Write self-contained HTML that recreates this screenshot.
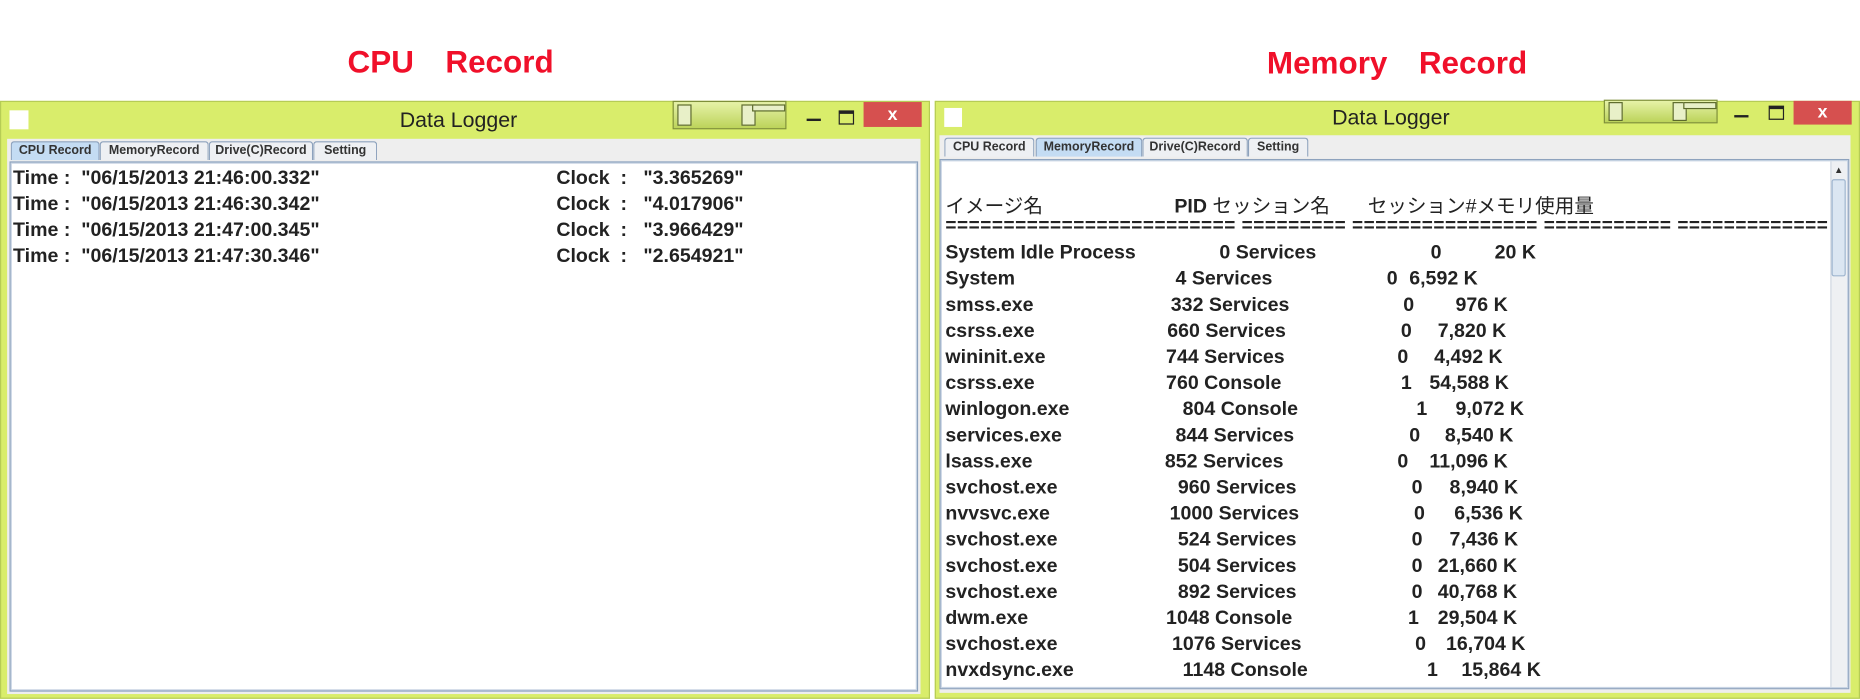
<!DOCTYPE html>
<html><head><meta charset="utf-8"><style>
html,body{margin:0;padding:0;background:#fff;width:1860px;height:700px;overflow:hidden}
#s{position:absolute;left:0;top:0;width:1568px;height:590px;transform:scale(1.18622,1.1864);transform-origin:0 0;font-family:"Liberation Sans","Noto Sans CJK JP",sans-serif}
.a{position:absolute;white-space:nowrap}
.h{color:#f0102a;font-weight:bold;font-size:26.5px}
.win{position:absolute;background:#d9ed6b;border:1px solid #b6cc55}
.ic{position:absolute;background:#fff;width:16px;height:16px}
.tt{position:absolute;font-size:18px;color:#222}
.sl{position:absolute;width:94px;height:22px;border:1px solid #7e8f3a;background:linear-gradient(#e6f2a8,#bcd35a)}
.sl i{position:absolute;border:1px solid #5c6a2a;background:#e8f0c8}
.min{position:absolute;width:12px;height:2px;background:#222}
.max{position:absolute;width:11px;height:8px;border:1px solid #222;border-top-width:3px}
.cl{position:absolute;width:49px;height:21px;background:#d6504f;color:#fff;font-size:15px;font-weight:bold;text-align:center;line-height:21px}
.tabs{position:absolute;background:#eeeeee}
.tab{position:absolute;height:15px;border:1px solid #8da2bd;border-bottom:none;background:#eef0f3;font-size:10.5px;font-weight:bold;color:#333;text-align:center;line-height:15px;border-radius:3px 3px 0 0}
.tab.on{background:#c4dcf3}
.pan{position:absolute;background:#fff;border:1px solid #8da2bd;box-shadow:inset 0 0 0 1px #c8d4e4;overflow:hidden}
.t{position:absolute;font-size:16.5px;font-weight:bold;color:#222;white-space:nowrap}
.j{font-weight:normal}
</style></head><body><div id="s">
<div class="a h" style="left:293px;top:30px">CPU　Record</div>
<div class="a h" style="left:1068px;top:31px">Memory　Record</div>

<div class="win" style="left:0;top:85px;width:782px;height:502px"></div>
<div class="ic" style="left:8px;top:93px"></div>
<div class="tt" style="left:337px;top:91px">Data Logger</div>
<div class="sl" style="left:567px;top:85px"><i style="left:3px;top:2px;width:10px;height:16px"></i><i style="left:57px;top:2px;width:10px;height:16px"></i><i style="left:66px;top:2px;width:26px;height:4px"></i></div>
<div class="min" style="left:680px;top:100px"></div>
<div class="max" style="left:707px;top:93px"></div>
<div class="cl" style="left:728px;top:86px">x</div>
<div class="tabs" style="left:6px;top:117px;width:770px;height:468px"></div>
<div class="tab on" style="left:9px;top:119px;width:73px">CPU Record</div>
<div class="tab" style="left:84px;top:119px;width:90px">MemoryRecord</div>
<div class="tab" style="left:176px;top:119px;width:86px">Drive(C)Record</div>
<div class="tab" style="left:264px;top:119px;width:52px">Setting</div>
<div class="pan" style="left:8px;top:136px;width:764px;height:445px">
<div class="t" style="left:2px;top:4px">Time :&nbsp; "06/15/2013 21:46:00.332"</div>
<div class="t" style="left:2px;top:26px">Time :&nbsp; "06/15/2013 21:46:30.342"</div>
<div class="t" style="left:2px;top:48px">Time :&nbsp; "06/15/2013 21:47:00.345"</div>
<div class="t" style="left:2px;top:70px">Time :&nbsp; "06/15/2013 21:47:30.346"</div>
<div class="t" style="left:460px;top:4px">Clock&nbsp; :&nbsp;&nbsp; "3.365269"</div>
<div class="t" style="left:460px;top:26px">Clock&nbsp; :&nbsp;&nbsp; "4.017906"</div>
<div class="t" style="left:460px;top:48px">Clock&nbsp; :&nbsp;&nbsp; "3.966429"</div>
<div class="t" style="left:460px;top:70px">Clock&nbsp; :&nbsp;&nbsp; "2.654921"</div>
</div>

<div class="win" style="left:788px;top:85px;width:778px;height:502px"></div>
<div class="ic" style="left:796px;top:91px;width:15px"></div>
<div class="tt" style="left:1123px;top:89px">Data Logger</div>
<div class="sl" style="left:1352px;top:84px;height:18px"><i style="left:3px;top:1px;width:10px;height:14px"></i><i style="left:57px;top:1px;width:10px;height:14px"></i><i style="left:66px;top:1px;width:26px;height:4px"></i></div>
<div class="min" style="left:1462px;top:97px"></div>
<div class="max" style="left:1491px;top:89px"></div>
<div class="cl" style="left:1512px;top:85px;height:20px;line-height:20px">x</div>
<div class="tabs" style="left:792px;top:114px;width:768px;height:470px"></div>
<div class="tab" style="left:796px;top:116px;width:74px">CPU Record</div>
<div class="tab on" style="left:873px;top:116px;width:88px">MemoryRecord</div>
<div class="tab" style="left:963px;top:116px;width:87px">Drive(C)Record</div>
<div class="tab" style="left:1052px;top:116px;width:49px">Setting</div>
<div class="pan" style="left:792px;top:134px;width:765px;height:445px">
<div style="position:absolute;right:1px;top:1px;width:13px;height:443px;background:#eef0f3;border-left:1px solid #d0d8e2"></div>
<div style="position:absolute;right:2px;top:16px;width:10px;height:80px;background:#dbe6f2;border:1px solid #9fb5cf;border-radius:2px"></div>
<div style="position:absolute;right:4px;top:4px;font-size:8px;color:#333">▲</div>
</div>
<div style="position:absolute;left:792px;top:134px;width:750px;height:445px;overflow:hidden">
<div class="t j" style="left:5px;top:26px">イメージ名</div>
<div class="t" style="left:198px;top:26px">PID <span class="j">セッション名</span></div>
<div class="t j" style="left:361px;top:26px">セッション#メモリ使用量</div>
<div class="t" style="left:5px;top:48px;font-size:16px;letter-spacing:0.45px">========================= ========= ================ =========== =============</div>
<div class="t" style="left:5px;top:70px">System Idle Process</div><div class="t" style="left:236px;top:70px">0 Services</div><div class="t" style="left:414px;top:70px">0</div><div class="t" style="left:468px;top:70px">20 K</div>
<div class="t" style="left:5px;top:92px">System</div><div class="t" style="left:199px;top:92px">4 Services</div><div class="t" style="left:377px;top:92px">0</div><div class="t" style="left:396px;top:92px">6,592 K</div>
<div class="t" style="left:5px;top:114px">smss.exe</div><div class="t" style="left:195px;top:114px">332 Services</div><div class="t" style="left:391px;top:114px">0</div><div class="t" style="left:435px;top:114px">976 K</div>
<div class="t" style="left:5px;top:136px">csrss.exe</div><div class="t" style="left:192px;top:136px">660 Services</div><div class="t" style="left:389px;top:136px">0</div><div class="t" style="left:420px;top:136px">7,820 K</div>
<div class="t" style="left:5px;top:158px">wininit.exe</div><div class="t" style="left:191px;top:158px">744 Services</div><div class="t" style="left:386px;top:158px">0</div><div class="t" style="left:417px;top:158px">4,492 K</div>
<div class="t" style="left:5px;top:180px">csrss.exe</div><div class="t" style="left:191px;top:180px">760 Console</div><div class="t" style="left:389px;top:180px">1</div><div class="t" style="left:413px;top:180px">54,588 K</div>
<div class="t" style="left:5px;top:202px">winlogon.exe</div><div class="t" style="left:205px;top:202px">804 Console</div><div class="t" style="left:402px;top:202px">1</div><div class="t" style="left:435px;top:202px">9,072 K</div>
<div class="t" style="left:5px;top:224px">services.exe</div><div class="t" style="left:199px;top:224px">844 Services</div><div class="t" style="left:396px;top:224px">0</div><div class="t" style="left:426px;top:224px">8,540 K</div>
<div class="t" style="left:5px;top:246px">lsass.exe</div><div class="t" style="left:190px;top:246px">852 Services</div><div class="t" style="left:386px;top:246px">0</div><div class="t" style="left:413px;top:246px">11,096 K</div>
<div class="t" style="left:5px;top:268px">svchost.exe</div><div class="t" style="left:201px;top:268px">960 Services</div><div class="t" style="left:398px;top:268px">0</div><div class="t" style="left:430px;top:268px">8,940 K</div>
<div class="t" style="left:5px;top:290px">nvvsvc.exe</div><div class="t" style="left:194px;top:290px">1000 Services</div><div class="t" style="left:400px;top:290px">0</div><div class="t" style="left:434px;top:290px">6,536 K</div>
<div class="t" style="left:5px;top:312px">svchost.exe</div><div class="t" style="left:201px;top:312px">524 Services</div><div class="t" style="left:398px;top:312px">0</div><div class="t" style="left:430px;top:312px">7,436 K</div>
<div class="t" style="left:5px;top:334px">svchost.exe</div><div class="t" style="left:201px;top:334px">504 Services</div><div class="t" style="left:398px;top:334px">0</div><div class="t" style="left:420px;top:334px">21,660 K</div>
<div class="t" style="left:5px;top:356px">svchost.exe</div><div class="t" style="left:201px;top:356px">892 Services</div><div class="t" style="left:398px;top:356px">0</div><div class="t" style="left:420px;top:356px">40,768 K</div>
<div class="t" style="left:5px;top:378px">dwm.exe</div><div class="t" style="left:191px;top:378px">1048 Console</div><div class="t" style="left:395px;top:378px">1</div><div class="t" style="left:420px;top:378px">29,504 K</div>
<div class="t" style="left:5px;top:400px">svchost.exe</div><div class="t" style="left:196px;top:400px">1076 Services</div><div class="t" style="left:401px;top:400px">0</div><div class="t" style="left:427px;top:400px">16,704 K</div>
<div class="t" style="left:5px;top:422px">nvxdsync.exe</div><div class="t" style="left:205px;top:422px">1148 Console</div><div class="t" style="left:411px;top:422px">1</div><div class="t" style="left:440px;top:422px">15,864 K</div>
</div>
</div></body></html>
